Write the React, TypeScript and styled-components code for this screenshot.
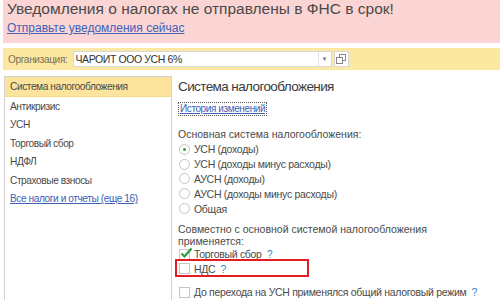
import React from "react";
import styled, { createGlobalStyle } from "styled-components";

const Global = createGlobalStyle`
  html, body { margin: 0; padding: 0; background: #fff; }
  body { font-family: "Liberation Sans", Arial, sans-serif; color: #4a4a4a; }
  * { box-sizing: border-box; }
`;

const Page = styled.div`
  width: 500px;
  height: 300px;
  overflow: hidden;
  padding-left: 3px;
`;

const Banner = styled.div`
  background: #fbd4d4;
  height: 43px;
  padding: 0 5px 0 4px;
`;

const BannerTitle = styled.div`
  font-size: 15.5px;
  line-height: 18px;
  color: #4a4a4a;
`;

const BannerLink = styled.a`
  display: inline-block;
  margin-top: 1px;
  font-size: 12px;
  line-height: 14px;
  color: #4062b8;
  text-decoration: underline;
`;

const Toolbar = styled.div`
  margin-top: 5px;
  height: 22px;
  background: #fce8a1;
  display: flex;
  align-items: center;
  padding-left: 5px;
  gap: 2px;
`;

const Label = styled.span`
  font-size: 10px;
  letter-spacing: -0.3px;
  color: #77715a;
  margin-right: 3px;
`;

const Input = styled.div`
  width: 259px;
  height: 16px;
  background: #fff;
  border: 1px solid #d8d8d8;
  display: flex;
  align-items: center;
`;

const InputText = styled.span`
  flex: 1;
  font-size: 10.5px;
  letter-spacing: -0.4px;
  color: #333;
  padding-left: 2px;
`;

const DropBtn = styled.span`
  width: 13px;
  height: 100%;
  border-left: 1px solid #e2e2e2;
  display: flex;
  align-items: center;
  justify-content: center;
  font-size: 6px;
  color: #777;
`;

const IconBtn = styled.div`
  width: 15px;
  height: 16px;
  background: #fff;
  border: 1px solid #d8d8d8;
  display: flex;
  align-items: center;
  justify-content: center;
`;

const Body = styled.div`
  display: flex;
  margin-top: 6px;
  height: 240px;
`;

const Sidebar = styled.div`
  width: 168px;
  margin-left: 1px;
  border: 1px solid #d2d2d2;
  border-bottom: none;
  display: flex;
  flex-direction: column;
`;

const NavItem = styled.div<{ $active?: boolean; $link?: boolean }>`
  height: 18.5px;
  display: flex;
  align-items: center;
  padding-left: 5px;
  font-size: 10.2px;
  letter-spacing: -0.45px;
  color: ${(p) => (p.$link ? "#4062b8" : "#4a4a4a")};
  text-decoration: ${(p) => (p.$link ? "underline" : "none")};
  background: ${(p) => (p.$active ? "#fce49c" : "transparent")};
  ${(p) => (p.$active ? "height: 20px; border-bottom: 1px solid #f3d98a;" : "")}
`;

const Content = styled.div`
  flex: 1;
  padding-left: 6px;
  display: flex;
  flex-direction: column;
`;

const Heading = styled.div`
  font-size: 13.5px;
  letter-spacing: -0.6px;
  line-height: 18px;
  color: #3a3a3a;
  margin-top: 2px;
`;

const HistoryLink = styled.a`
  align-self: flex-start;
  margin-top: 6px;
  font-size: 10px;
  letter-spacing: -0.4px;
  line-height: 12px;
  color: #4062b8;
  text-decoration: underline;
  border: 1px dotted #555;
  padding: 0 1px;
`;

const Caption = styled.div<{ $top: number }>`
  margin-top: ${(p) => p.$top}px;
  font-size: 10.5px;
  line-height: 12px;
  color: #4a4a4a;
`;

const Options = styled.div`
  display: flex;
  flex-direction: column;
  margin-top: 2px;
`;

const Option = styled.div`
  height: 14.8px;
  display: flex;
  align-items: center;
  gap: 4px;
  font-size: 10.5px;
  letter-spacing: -0.3px;
  color: #4a4a4a;
  padding-left: 1px;
`;

const Radio = styled.span<{ $on?: boolean }>`
  width: 11px;
  height: 11px;
  border-radius: 50%;
  border: 1px solid #c4c4c4;
  background: #fff;
  display: flex;
  align-items: center;
  justify-content: center;
  &::after {
    content: "";
    width: 3px;
    height: 3px;
    border-radius: 50%;
    background: ${(p) => (p.$on ? "#3a9a3a" : "transparent")};
  }
`;

const CheckRow = styled.div<{ $top?: number }>`
  height: 14.5px;
  display: flex;
  align-items: center;
  gap: 4px;
  font-size: 10.5px;
  letter-spacing: -0.3px;
  color: #4a4a4a;
  margin-top: ${(p) => p.$top ?? 0}px;
  position: relative;
`;

const Frame = styled.span`
  position: absolute;
  left: -3px;
  top: -2px;
  width: 134px;
  height: 18px;
  border: 2px solid #e21d24;
  pointer-events: none;
`;

const Box = styled.span`
  width: 11px;
  height: 11px;
  border: 1px solid #c4c4c4;
  background: #fff;
  position: relative;
  display: inline-block;
  flex-shrink: 0;
  margin-left: 1px;
`;

const Help = styled.span`
  color: #3a86c8;
  margin-left: 1px;
`;

const Check = () => (
  <svg
    width="13"
    height="12"
    viewBox="0 0 13 12"
    style={{ position: "absolute", left: 0, top: -3 }}
  >
    <path d="M1.5 6.5 L4.5 9.5 L11.5 1.5" fill="none" stroke="#2f9b3a" strokeWidth="2.2" />
  </svg>
);

const OpenIcon = () => (
  <svg width="10" height="10" viewBox="0 0 10 10">
    <rect x="3.5" y="0.5" width="6" height="6" fill="#fff" stroke="#888" />
    <rect x="0.5" y="3.5" width="6" height="6" fill="#fff" stroke="#888" />
  </svg>
);

export default function App() {
  const options = [
    "УСН (доходы)",
    "УСН (доходы минус расходы)",
    "АУСН (доходы)",
    "АУСН (доходы минус расходы)",
    "Общая",
  ];
  return (
    <Page>
      <Global />
      <Banner>
        <BannerTitle>Уведомления о налогах не отправлены в ФНС в срок!</BannerTitle>
        <BannerLink>Отправьте уведомления сейчас</BannerLink>
      </Banner>
      <Toolbar>
        <Label>Организация:</Label>
        <Input>
          <InputText>ЧАРОИТ ООО УСН 6%</InputText>
          <DropBtn>▼</DropBtn>
        </Input>
        <IconBtn>
          <OpenIcon />
        </IconBtn>
      </Toolbar>
      <Body>
        <Sidebar>
          <NavItem $active>Система налогообложения</NavItem>
          <NavItem>Антикризис</NavItem>
          <NavItem>УСН</NavItem>
          <NavItem>Торговый сбор</NavItem>
          <NavItem>НДФЛ</NavItem>
          <NavItem>Страховые взносы</NavItem>
          <NavItem $link>Все налоги и отчеты (еще 16)</NavItem>
        </Sidebar>
        <Content>
          <Heading>Система налогообложения</Heading>
          <HistoryLink>История изменений</HistoryLink>
          <Caption $top={12}>Основная система налогообложения:</Caption>
          <Options>
            {options.map((o, i) => (
              <Option key={o}>
                <Radio $on={i === 0} />
                {o}
              </Option>
            ))}
          </Options>
          <Caption $top={7}>
            Совместно с основной системой налогообложения
            <br />
            применяется:
          </Caption>
          <CheckRow>
            <Box>
              <Check />
            </Box>
            Торговый сбор <Help>?</Help>
          </CheckRow>
          <CheckRow>
            <Frame />
            <Box />
            НДС <Help>?</Help>
          </CheckRow>
          <CheckRow $top={9}>
            <Box />
            До перехода на УСН применялся общий налоговый режим <Help>?</Help>
          </CheckRow>
        </Content>
      </Body>
    </Page>
  );
}
